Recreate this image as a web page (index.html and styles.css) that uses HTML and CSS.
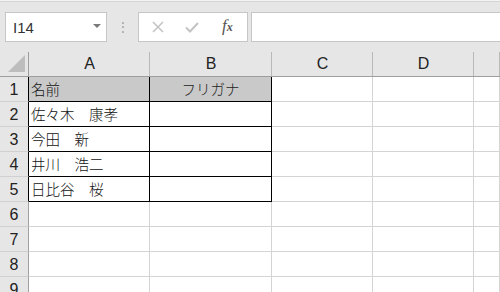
FILE: index.html
```html
<!DOCTYPE html>
<html lang="ja">
<head>
<meta charset="utf-8">
<link rel="stylesheet" href="styles.css">
</head>
<body>
<div class="toolbar">
  <div class="namebox">
    <span class="ref">I14</span>
    <svg class="drop" width="8" height="5" viewBox="0 0 8 5"><polygon points="0,0 8,0 4,4" fill="#7a7a7a"/></svg>
  </div>
  <div class="dots"><i></i><i></i><i></i></div>
  <div class="buttons">
    <svg class="btn" width="14" height="14" viewBox="0 0 14 14"><path d="M2 2 L12 12 M12 2 L2 12" stroke="#c3c3c3" stroke-width="1.5" fill="none"/></svg>
    <svg class="btn" width="16" height="14" viewBox="0 0 16 14"><path d="M2 7.5 L6 11.5 L14 3" stroke="#c3c3c3" stroke-width="2" fill="none"/></svg>
    <span class="fx"><span class="f">f</span><span class="x">x</span></span>
  </div>
  <div class="formula"></div>
</div>
<div class="sheet">
  <div class="ch corner"><svg width="29" height="26" viewBox="0 0 29 26"><polygon points="8,22 25,5 25,22" fill="#bdbdbd"/></svg></div>
  <div class="ch">A</div><div class="ch">B</div><div class="ch">C</div><div class="ch">D</div><div class="ch"></div>

  <div class="rh dark">1</div><div class="c blk head">名前</div><div class="c blk head center">フリガナ</div><div class="c"></div><div class="c"></div><div class="c"></div>
  <div class="rh dark">2</div><div class="c blk">佐々木　康孝</div><div class="c blk"></div><div class="c"></div><div class="c"></div><div class="c"></div>
  <div class="rh dark">3</div><div class="c blk">今田　新</div><div class="c blk"></div><div class="c"></div><div class="c"></div><div class="c"></div>
  <div class="rh dark">4</div><div class="c blk">井川　浩二</div><div class="c blk"></div><div class="c"></div><div class="c"></div><div class="c"></div>
  <div class="rh dark">5</div><div class="c blk">日比谷　桜</div><div class="c blk"></div><div class="c"></div><div class="c"></div><div class="c"></div>
  <div class="rh">6</div><div class="c"></div><div class="c"></div><div class="c"></div><div class="c"></div><div class="c"></div>
  <div class="rh">7</div><div class="c"></div><div class="c"></div><div class="c"></div><div class="c"></div><div class="c"></div>
  <div class="rh">8</div><div class="c"></div><div class="c"></div><div class="c"></div><div class="c"></div><div class="c"></div>
  <div class="rh">9</div><div class="c"></div><div class="c"></div><div class="c"></div><div class="c"></div><div class="c"></div>
</div>
</body>
</html>
```
FILE: styles.css
```css
* { box-sizing: border-box; }
html, body { margin: 0; padding: 0; }
body {
  width: 500px;
  height: 292px;
  overflow: hidden;
  background: #ffffff;
  font-family: "Liberation Sans", Arial, sans-serif;
}
.toolbar {
  height: 50px;
  display: flex;
  align-items: flex-start;
  padding: 12px 0 0 5px;
  background: linear-gradient(#f4f4f4 0 1px, #d4d4d4 1px 2px, #e6e6e6 2px);
  white-space: nowrap;
}
.namebox {
  width: 102px;
  height: 30px;
  background: #fff;
  border: 1px solid #c6c6c6;
  display: flex;
  align-items: center;
  padding: 0 0 0 7px;
}
.ref {
  font-size: 15px;
  color: #333;
  flex: 1;
  padding-top: 1px;
}
.drop { margin-right: 5px; margin-top: -2px; }
.dots {
  width: 31px;
  height: 30px;
  display: flex;
  flex-direction: column;
  align-items: center;
  justify-content: center;
  gap: 2.5px;
}
.dots i {
  display: block;
  width: 2px;
  height: 2px;
  background: #b4b4b4;
}
.buttons {
  width: 110px;
  height: 30px;
  background: #fff;
  border: 1px solid #c6c6c6;
  display: flex;
  align-items: center;
  padding-left: 12px;
}
.btn { flex: none; }
.btn + .btn { margin-left: 19px; }
.fx {
  margin-left: 22px;
  font-family: "Liberation Serif", "Times New Roman", serif;
  font-style: italic;
  color: #555;
  font-size: 17px;
  padding-bottom: 2px;
}
.fx .x { font-size: 12px; font-weight: bold; }
.formula {
  margin-left: 3px;
  flex: 1;
  height: 30px;
  background: #fff;
  border: 1px solid #c6c6c6;
  border-right: none;
}
.sheet {
  display: grid;
  grid-template-columns: 29px 121px 122px 101px 101px 1fr;
  grid-template-rows: 27px repeat(9, 25px);
}
.ch {
  background: linear-gradient(#b9b9b9, #b9b9b9) right bottom / 1px calc(100% - 2px) no-repeat, #e6e6e6;
  border-bottom: 1px solid #9e9e9e;
  display: flex;
  align-items: center;
  justify-content: center;
  font-size: 16px;
  color: #222;
  padding-top: 2px;
}
.corner {
  background: linear-gradient(#9e9e9e, #9e9e9e) right bottom / 1px calc(100% - 2px) no-repeat, #e6e6e6;
  padding: 0;
}
.corner svg { display: block; }
.rh {
  background: #e6e6e6;
  border-right: 1px solid #a0a0a0;
  border-bottom: 1px solid #d0d0d0;
  display: flex;
  align-items: center;
  justify-content: center;
  font-size: 16px;
  color: #222;
  padding-top: 1px;
}
.rh.dark { border-right-color: #000; }
.c {
  border-right: 1px solid #d4d4d4;
  border-bottom: 1px solid #d4d4d4;
  font-family: "Noto Sans CJK JP", "Noto Sans", sans-serif;
  font-size: 14.5px;
  font-weight: 300;
  color: #111;
  display: flex;
  align-items: center;
  padding-left: 2px;
  line-height: 1;
  white-space: nowrap;
}
.c.blk { border-right-color: #000; border-bottom-color: #000; }
.c.head { background: #c9c9c9; }
.c.center { justify-content: center; padding-left: 0; color: #222; }
```
